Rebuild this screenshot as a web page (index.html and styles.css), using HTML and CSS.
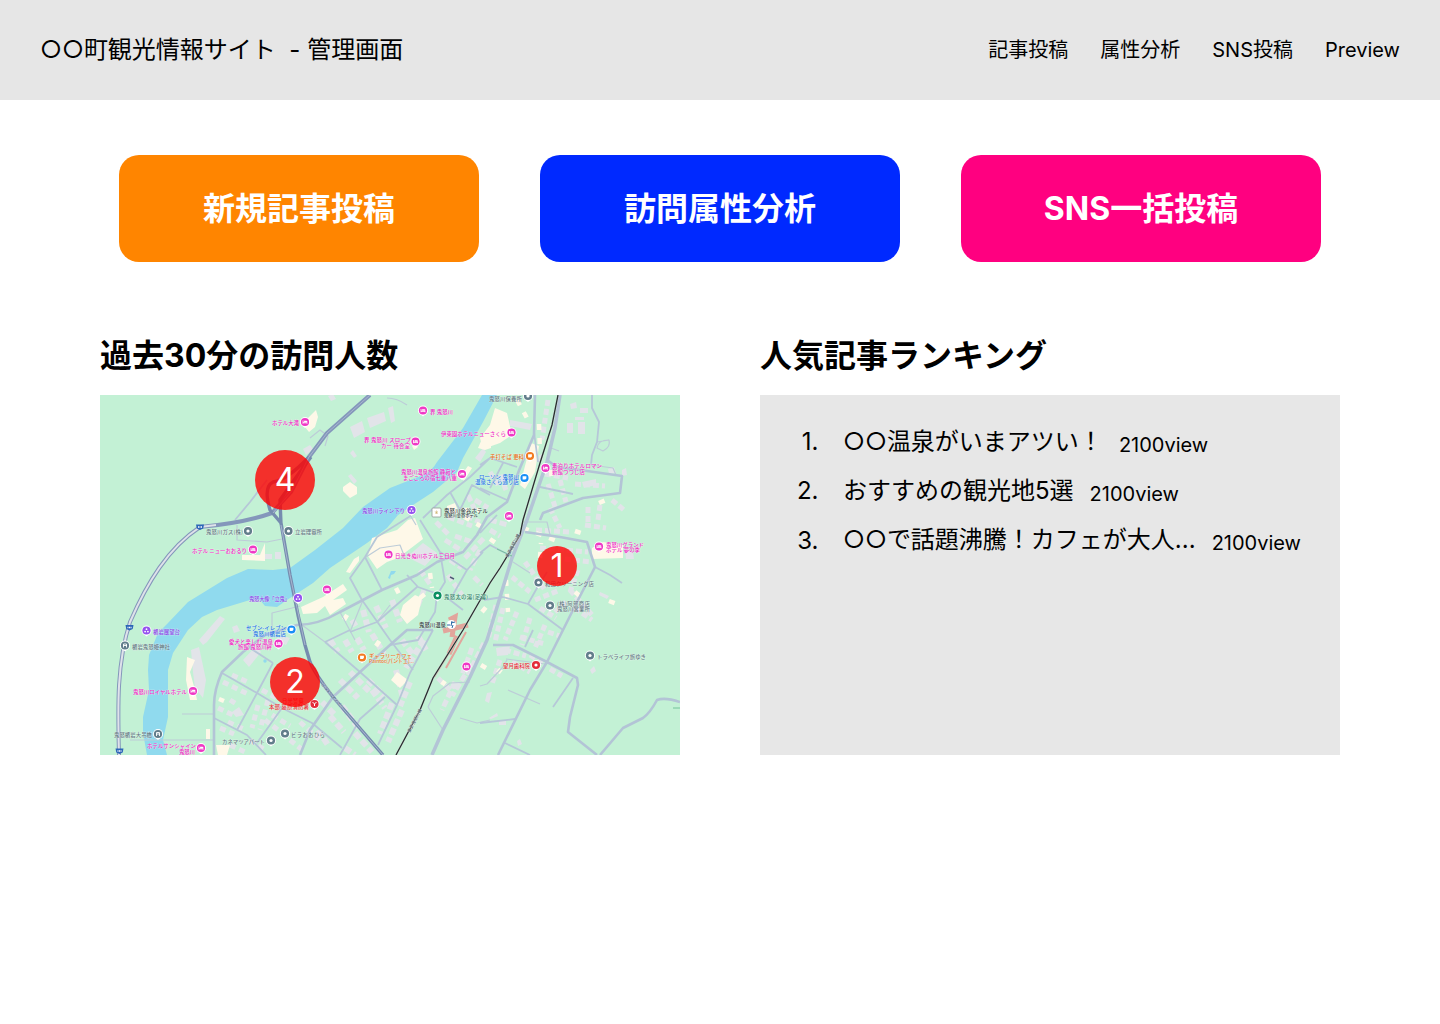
FILE: index.html
```html
<!DOCTYPE html>
<html lang="ja">
<head>
<meta charset="utf-8">
<title>○○町観光情報サイト - 管理画面</title>
<link rel="stylesheet" href="styles.css">
</head>
<body>
<header class="header">
  <div class="site-title">○○町観光情報サイト&nbsp; - 管理画面</div>
  <nav class="nav"><a>記事投稿</a><a>属性分析</a><a>SNS投稿</a><a>Preview</a></nav>
</header>
<main>
  <div class="actions">
    <a class="action orange">新規記事投稿</a>
    <a class="action blue">訪問属性分析</a>
    <a class="action pink">SNS一括投稿</a>
  </div>
  <div class="panels">
    <section>
      <h2>過去30分の訪問人数</h2>
      <div class="map">
        <svg class="map-art" viewBox="100 395 580 360" width="580" height="360">
          <defs>
            <g id="pin"><path d="M-4.6 1Q-3 4 0 6Q3 4 4.6 1Z" fill="#fff"/><circle r="5" fill="#fff"/><circle r="4.1" fill="currentColor"/></g>
            <g id="bed"><use href="#pin"/><path d="M-2.4-1.6H-1.6V.3H2.4V1.8H1.7V1.2H-1.7V1.8H-2.4ZM-.9-1.2H1.4Q2.4-1.2 2.4 0H-.9Z" fill="#fff"/></g>
            <g id="dot"><use href="#pin"/><circle r="1.6" fill="#fff"/></g>
            <g id="bag"><use href="#pin"/><path d="M-1.9-1.7H1.9V.4L.8 1.6H-1.9Z" fill="#fff"/></g>
            <g id="sight"><use href="#pin"/><circle cy="-1.3" r=".9" fill="#fff"/><circle cx="-1.4" cy="1.1" r=".9" fill="#fff"/><circle cx="1.4" cy="1.1" r=".9" fill="#fff"/></g>
            <g id="shield"><path d="M-4-2.5H4L3.2 1.5 0 3-3.2 1.5Z" fill="#2c66b8"/><path d="M-2 0H2" stroke="#fff" stroke-width="1.6" stroke-dasharray="1 .5"/></g>
          </defs>
          <rect x="100" y="395" width="580" height="360" fill="#c3f1d5"/>

          <path class="river" d="M482 395L463 428 437 462Q432 471 423 475L390 488 363 507 343 528 315 550 290 568 273 570 248 569 227 578 188 602 168 623 158 633 149 655 148 670 149 690 143 717 143 733 147 755H167L163 740 168 717 168 670 173 653 188 630 202 617 217 610 250 600H260L265 606 277 607 287 600 313 583 330 568 367 543 387 528 398 515 413 505 433 492 457 472 463 458 483 422 497 395Z"/>
          <path class="river" d="M388 578L391 571 396 571 394 574 391 575 390 579Z"/><circle class="river" cx="265" cy="661" r="1.7"/>

          <g class="bld">
            <path stroke-width="5" stroke-dasharray="6 3" d="M548 400L542 440M545 474L568 478M548 484L556 510M560 480L566 502M575 484L605 486M588 507L588 525M600 505L598 520M612 500L624 510M550 508L560 528M536 530L570 532M585 525L606 528M540 548L588 552M556 558L592 562M525 562L545 590M512 577L530 592M535 600L560 590M570 590L592 615M578 570L570 592M540 608L556 618M555 612L568 600M496 605L488 640M503 608L495 642M517 612L505 640M530 618L522 645M545 625L535 648M505 650L526 656M530 655L544 664M550 669L562 676M512 662L530 672M520 637L545 644M548 632L560 636M500 660L492 684M575 608L592 620"/>
            <path stroke-width="6" stroke-dasharray="7 3" d="M345 640L352 652M357 638L364 650M372 634L384 654M363 610L369 632M376 606L386 628M392 600L400 622M352 620L358 630M330 640L338 652M340 680L358 698M350 672L370 692M368 680L384 696M372 690L385 708M396 670L403 698M410 682L400 706M402 710L388 742M392 703L380 734M322 702L336 716M330 716L344 732M342 706L360 730M355 733L372 752M318 730L328 745M345 748L355 755M402 640L414 656M418 636L426 650M424 640L406 668"/>
            <path stroke-width="5" stroke-dasharray="6 4" d="M223 682L248 694M232 675L250 683M262 690L280 700M258 705L252 728M268 700L260 730M228 722L246 730M220 728L234 734M218 708L235 716M230 700L238 705M265 720L278 730M272 715L290 726M250 740L265 750M290 740L305 752M230 745L245 752M300 722L320 740"/>
            <path stroke-width="5" stroke-dasharray="7 3" d="M475 500L488 508M468 495L475 510M490 472L498 485M500 475L506 490M436 522L450 536M448 517L472 526M466 516L480 522M445 540L464 552M455 536L472 542M450 560L462 568M465 558L485 537M490 520L508 525M490 530L500 536M480 550L470 570M420 570L430 584M424 590L418 606M448 575L462 595M474 577L482 585M472 648L462 675M484 643L468 675M455 682L442 710M465 675L452 696M438 678L450 690"/>
            <path d="M350 427L362 421 365 432 354 438ZM367 418L384 412 386 421 370 428ZM388 408L393 406 395 421 391 423ZM328 396L333 394 336 399 331 401ZM350 453L353 450 357 456 354 458ZM348 476L351 474 357 481 354 484ZM303 449L310 445 313 449 306 455ZM510 420L532 424 530 430 510 426ZM567 423H573V433H567ZM578 422H585V434H578ZM575 417H584V420H575ZM580 408H588V413H580ZM407 557L423 543 437 553 425 566ZM475 458L483 448 486 452 480 462ZM265 554H272V559H265ZM275 552H281V559H275ZM191 650L199 647 206 680 203 698 195 688 193 672ZM220 616L225 619 207 642 203 645 199 640ZM232 627L237 625 240 631 234 633ZM243 660L256 646 261 652 249 667ZM232 712L239 707 244 715 236 717ZM281 635L290 638 286 645 278 642ZM496 648L510 646 508 655 497 656ZM570 404L576 402 577 408 571 409ZM608 469L614 467 616 473 609 474ZM622 470L626 468 627 475 622 476ZM539 455L544 454 542 461 538 462ZM582 482L596 479 596 485 584 488ZM590 670L594 666 596 671 592 674ZM487 693L492 692 489 703 485 701ZM489 718L497 713 498 716 491 719ZM499 720H506V725H499ZM517 741L520 739 522 744 518 746ZM625 550L633 552 634 559 626 559ZM600 592L609 596 607 599 599 595Z"/>
          </g>
          <g class="yellow">
            <path d="M308 418L316 410 318 417 315 427 309 432 305 427ZM343 487L350 482 357 487 357 494 350 498 343 491ZM478 448L485 432 491 428V448L485 450ZM495 408L507 413 512 435 500 443 483 449 480 438 490 425ZM531 443L539 446 535 472 525 489 520 485ZM370 547L372 538 397 530 408 520 415 518 423 539 398 558 387 562 377 569 368 556ZM301 607L323 597 343 584 347 590 333 600 343 598 346 604 330 615 325 606 317 613 303 614ZM400 615L403 605 415 595 422 598 418 615 407 624ZM242 555H260L265 543V561L242 560ZM187 657L195 660 190 672 195 690 197 700 190 700 186 680ZM391 680L397 672 408 680 400 688ZM592 548L603 542 623 545 623 558 592 559ZM216 745H230L227 755H218ZM206 729H210V739H206ZM412 446L416 443 418 447 414 450ZM460 477L468 466 472 468 464 481ZM447 506L455 503 458 511 447 513ZM346 572L354 559 359 556 359 561 350 573Z"/>
            <path stroke-width="4.5" stroke-dasharray="6 8" d="M517 400L527 418M539 424L540 452M551 470L552 482M575 531L581 533M523 528L557 541M540 558L541 543M490 539L500 546M506 580L508 612M575 592L580 596M609 601L622 606M599 503L606 500M463 510L480 510M452 510L484 528M430 573L432 588M396 588L400 596M344 620L350 610M376 646L380 640M420 598L430 590M482 612L487 606M498 673L501 669M481 665L486 668M442 685L445 681M219 699L224 701"/>
          </g>

          <g class="minor">
            <path d="M387 398Q397 398 407 405M310 438L320 430 328 436 325 446M237 525V540L267 542 282 539M272 632V613L300 606M591 465L613 468 616 475M551 448L559 451M523 522L547 522 550 535M513 562L530 573M366 557L380 548 400 545 405 558M428 707L443 730M428 707L433 696 450 683 470 682M460 718L477 723 490 720M182 714H214M130 740H213M480 686L487 684 502 668 507 660M410 515L416 525M506 659L545 664M508 690L540 704M340 612L355 640M363 600L350 632M390 605L377 622M302 625L325 642"/>
            <path d="M597 448Q598 440 609 440Q611 447 603 451ZM597 442L609 440"/>
          </g>
          <g class="roads">
            <path d="M267 480L250 502 235 520M490 458L470 477 447 495 423 518M450 492L460 510 472 485 490 495M480 465L490 458 517 467M503 463L490 488M480 488L507 500M534 432L538 462M592 395V408L599 422 597 442 592 455 591 465M540 487L573 494M595 567L610 575 622 583M503 597L528 604 563 630M528 604L537 588 547 572M480 553L490 545 513 557M480 533L497 515M412 515L377 537 365 557 350 578 362 600 390 640 413 670M365 557L382 590M420 520L440 552 445 582 437 595 435 612 418 640 390 645M407 575L418 587 435 593M440 552L467 570 483 552M350 632L377 622 417 587M433 630L410 673 397 705 378 745M360 672L397 705M325 642L350 630M325 642L360 672M290 712L312 723 342 748M340 755L360 719 385 697M222 673L257 693 282 708 300 717M214 718L247 735 266 755M273 663L257 693 237 730M250 648L273 663M282 708L257 743M553 707L573 678M480 723L515 719M505 743L530 755M525 647L533 630M467 570L450 600 463 610M513 557L518 540M484 600L503 597"/>
          </g>
          <g class="major">
            <path d="M560 395L555 428 547 462 527 520 512 558 487 640 470 677 443 730 432 755" stroke-width="3.5"/>
            <path d="M535 395L534 435 520 468 507 502 487 517 477 535 463 552 437 562 417 575 382 590 340 612Q318 625 297 625L265 635 243 652 222 672Q214 690 214 705V755"/>
            <path d="M547 460L557 467 580 470 622 476 620 493 583 498 543 513 540 520M525 532L560 537 587 542 595 567 577 602 558 640 547 662 530 690 498 755M493 645L513 645 547 662 577 678 578 685 570 717 568 732 597 755M600 755L623 728 643 718Q650 713 657 700 665 697 680 702M433 630L407 630 390 645 360 672 333 697 310 730 300 755"/>
          </g>

          <g class="highway">
            <path d="M370 395L327 433 309 457 291 492 272 513Q244 523 200 527C168 548 147 583 130 622C116 665 118 712 119 755" stroke="#8497bb" stroke-width="4"/>
            <path d="M216 525L200 527C168 548 147 583 130 622C116 665 118 712 119 755" stroke="#dfe2ea" stroke-width="2"/>
            <path d="M309 457Q287 480 273 482 263 487 270 510L281 523 290 575 298 615 305 645 310 662Q315 674 333 697L383 755M311 457Q301 470 280 500L281 524" stroke="#768caf" stroke-width="3.4"/>
            <path d="M370 395L327 433 309 457 291 492 273 513M281 525L290 575 305 645M310 662Q315 674 333 697L383 755" stroke="#a7b5ce" stroke-width="1"/>
          </g>

          <g fill="none" stroke="#e2a59c" stroke-width="5"><path d="M449 620L455 617 452 637M443 631L468 625M457 636L449 654"/><path d="M458 638L434 677M466 632L446 668" stroke-width="2"/></g>
          <path d="M558 395L552 425 540 463 523 520 520 535 500 568 490 583 463 630 433 678 420 710 396 755" fill="none" stroke="#d9ddde" stroke-width="1.9"/>
          <path d="M558 395L552 425 540 463 523 520 520 535 500 568 490 583 463 630 433 678 420 710 396 755" fill="none" stroke="#26302e" stroke-width="1.3"/>
          <path d="M497 549L512 556M480 597L486 595M673 708H680" stroke="#73c39a" stroke-width="1" fill="none"/>

          <g class="labels">
            <g fill="#f128c5">
              <text x="272" y="424.500" textLength="27">ホテル大滝</text>
              <text x="430" y="413.500" textLength="23">界 鬼怒川</text>
              <text x="364" y="442" textLength="47">界 鬼怒川 スロープ</text><text x="381" y="447.800" textLength="29">カー 待合室</text>
              <text x="441" y="435.500" textLength="65">伊東園ホテルニューさくら</text>
              <text x="401" y="474" textLength="55">鬼怒川温泉旅館 静寂と</text><text x="403" y="479.800" textLength="54">まごころの宿七重八重</text>
              <text x="552" y="468" textLength="50">素泊りホテルロマン</text><text x="552" y="473.800" textLength="33">新館つつじ店</text>
              <text x="606" y="546.700" textLength="38">鬼怒川グランド</text><text x="606" y="552.300" textLength="34">ホテル 夢の季</text>
              <text x="395" y="557.500" textLength="60">日光きぬ川ホテル三日月</text>
              <text x="192" y="552.500" textLength="55">ホテル ニューおおるり</text>
              <text x="229" y="643.700" textLength="44">愛犬と楽しむ温泉</text><text x="238" y="649.300" textLength="34">旅館 鬼怒川絆</text>
              <text x="133" y="694" textLength="54">鬼怒川ロイヤルホテル</text>
              <text x="147" y="748.300" textLength="49">ホテルサンシャイン</text><text x="179" y="754" textLength="16">鬼怒川</text>
            </g>
            <g fill="#8d45e8"><text x="362" y="512.800" textLength="43">鬼怒川ライン下り</text><text x="249" y="601" textLength="41">鬼怒大像「立鬼」</text><text x="153" y="633.500" textLength="27">楯岩展望台</text></g>
            <g fill="#2673e8"><text x="479" y="478.500" textLength="40">ローソン 鬼怒川</text><text x="475" y="484.200" textLength="44">温泉さくら通り店</text><text x="246" y="630.300" textLength="40">セブン-イレブン</text><text x="253" y="635.900" textLength="33">鬼怒川楯岩店</text></g>
            <g fill="#e9711c"><text x="490" y="459" textLength="34">手打そば 更科</text><text x="369" y="657.500" textLength="43">ギャラリーカフェ</text><text x="369" y="663.200" textLength="45" lengthAdjust="spacingAndGlyphs">Paintoɛ(パントエ)...</text></g>
            <g fill="#687b86"><text x="489" y="400.500" textLength="33">鬼怒川保養所</text><text x="206" y="534" textLength="37">鬼怒川ガス(株)</text><text x="295" y="534" textLength="27">立岩理容所</text><text x="545" y="585.500" textLength="49">和田クリーニング店</text><text x="557" y="605.700" textLength="33">(株)阿部商店</text><text x="557" y="611.300" textLength="33">鬼怒川営業所</text><text x="132" y="648.700" textLength="38">楯岩鬼怒姫神社</text><text x="114" y="737" textLength="38">鬼怒楯岩大吊橋</text><text x="222" y="743.500" textLength="43">カネマツアパート</text><text x="291" y="737" textLength="34">ビラおおひら</text><text x="597" y="658.500" textLength="49">トラベライフ旅ゆき</text></g>
            <text x="444" y="598.500" textLength="44" fill="#39866e">鬼怒太の湯(足湯)</text>
            <g fill="#343e43"><text x="444" y="512.800" textLength="44">鬼怒川金谷ホテル</text><text x="444" y="517.400" textLength="34" class="tiny">鬼怒川金谷ホテル</text><text x="419" y="626.500" textLength="27">鬼怒川温泉</text></g>
            <g fill="#e9303b"><text x="503" y="667.500" textLength="27">望月歯科院</text><text x="282" y="703.300" textLength="22">日光警察</text><text x="269" y="709.300" textLength="40">本部 藤原消防署</text></g>
            <g fill="#52606a" class="tiny"><text transform="translate(508 558) rotate(-63)" textLength="26">東武鬼怒川線</text><text transform="translate(410 733) rotate(-63)" textLength="26">東武鬼怒川線</text></g>
            <text transform="translate(321 685) rotate(49)" textLength="31" fill="#566b8c" class="tiny">Nikko Kaido</text>
          </g>

          <g color="#ef38c5"><use href="#bed" x="305" y="422"/><use href="#bed" x="423" y="410.500"/><use href="#bed" x="415.500" y="441.500"/><use href="#bed" x="511.500" y="432.500"/><use href="#bed" x="462" y="474"/><use href="#bed" x="545.500" y="468"/><use href="#bed" x="509" y="516"/><use href="#bed" x="599" y="546.500"/><use href="#bed" x="388.500" y="554.500"/><use href="#bed" x="327" y="589.500"/><use href="#bed" x="253" y="549.500"/><use href="#bed" x="278.500" y="643.500"/><use href="#bed" x="193" y="691"/><use href="#bed" x="201" y="748"/><use href="#bed" x="466.500" y="666.500"/></g>
          <g color="#9553ef"><use href="#sight" x="411.500" y="510"/><use href="#sight" x="298" y="598"/><use href="#sight" x="146.500" y="630.500"/></g>
          <g color="#188ef5"><use href="#bag" x="524.500" y="478"/><use href="#bag" x="291.500" y="629.500"/></g>
          <g color="#f27b20"><use href="#bag" x="530" y="456"/><use href="#bag" x="362" y="657.500"/></g>
          <g color="#627d8b"><use href="#dot" x="528" y="396"/><use href="#dot" x="248" y="531"/><use href="#dot" x="288.500" y="531"/><use href="#dot" x="538.500" y="582.500"/><use href="#dot" x="550" y="605.500"/><use href="#dot" x="590" y="655.500"/><use href="#dot" x="271" y="740.500"/><use href="#dot" x="285" y="733.500"/><use href="#pin" x="125" y="645.500"/><use href="#pin" x="158" y="734"/></g>
          <path d="M123.500 647.500V644H126.500V647.500M123 645.500H127M156.500 736V732.500H159.500V736M156 734H160" stroke="#fff" stroke-width=".9" fill="none"/>
          <use href="#dot" x="437.500" y="595.500" color="#0a8f62"/>
          <use href="#dot" x="536" y="665" color="#e32d39"/>
          <g color="#e32d39"><use href="#pin" x="314.500" y="704"/></g><path d="M312.500 702L314.500 704 316.500 702M314.500 704V706" stroke="#fff" fill="none"/>
          <use href="#shield" x="200" y="527"/><use href="#shield" x="129.500" y="627.500"/><use href="#shield" x="119.500" y="751"/>
          <rect x="432" y="508" width="9" height="9" rx="1" fill="#fff" stroke="#8f9995" stroke-width=".8"/><path d="M436.500 510.500V514M434.800 511.500L438 513.500M438 511.500L435 513.500" stroke="#ccb26b" stroke-width=".6"/>
          <circle cx="451.500" cy="624.500" r="4.500" fill="#fff"/><path d="M447 625H450M452 621L451 626M451 623L455 622M453 625L452 628" stroke="#2767a5"/>
          <path d="M450 577L454 579" stroke="#4d5c74" stroke-width="1.500"/>
        </svg>
        <span class="visitors four">4</span>
        <span class="visitors one">1</span>
        <span class="visitors two">2</span>
      </div>
    </section>
    <section>
      <h2>人気記事ランキング</h2>
      <div class="ranking">
        <div class="row"><span class="num">1.</span><span class="name">○○温泉がいまアツい！</span><span class="views">2100view</span></div>
        <div class="row"><span class="num">2.</span><span class="name">おすすめの観光地5選</span><span class="views">2100view</span></div>
        <div class="row"><span class="num last">3.</span><span class="name">○○で話題沸騰！カフェが大人...</span><span class="views">2100view</span></div>
      </div>
    </section>
  </div>
</main>
</body>
</html>
```
FILE: styles.css
```css
* { box-sizing: border-box; }
body { margin: 0; background: #fff; color: #000; font-family: Inter, "Noto Sans CJK JP", sans-serif; }
.header { height: 100px; padding: 0 40px; background: #e6e6e6; display: flex; align-items: center; justify-content: space-between; }
.site-title { font-size: 24px; line-height: 30px; }
.nav { display: flex; gap: 32px; font-size: 20px; line-height: 24px; }
.actions { display: flex; justify-content: center; gap: 61px; padding-top: 55px; }
.action { width: 360px; height: 107px; border-radius: 20px; display: flex; align-items: center; justify-content: center; color: #fff; font-size: 32px; font-weight: 700; line-height: 40px; }
.orange { background: #ff8500; }
.blue { background: #0029ff; }
.pink { background: #ff0080; }
.panels { display: grid; grid-template-columns: 580px 580px; gap: 80px; padding: 74px 100px 0; }
h2 { margin: 0 0 19px; font-size: 32px; font-weight: 700; line-height: 40px; white-space: nowrap; }
.map { position: relative; height: 360px; overflow: hidden; }
.map-art { display: block; }
.river { fill: #90daee; }
.bld { fill: #e2e4e9; }
.bld path[stroke-width] { fill: none; stroke: #e2e4e9; }
.yellow { fill: #fef8e8; }
.yellow path[stroke-width] { fill: none; stroke: #fef8e8; }
.minor, .roads, .major, .highway { fill: none; stroke-linejoin: round; }
.minor { stroke: #bdccd8; stroke-width: 1.2; }
.roads { stroke: #b6c7d8; stroke-width: 1.8; }
.major { stroke: #b3c4d6; stroke-width: 2.6; }
.labels { font-family: "Noto Sans CJK JP", sans-serif; font-size: 5.4px; font-weight: 500; }
.labels text { stroke: rgba(255, 255, 255, .5); stroke-width: .6px; paint-order: stroke; }
.labels .tiny { font-size: 4.2px; }
.visitors { position: absolute; display: flex; align-items: center; justify-content: center; border-radius: 50%; background: rgba(255, 0, 0, .8); color: #fff; font-size: 32px; line-height: 40px; }
.four { left: 155px; top: 55px; width: 60px; height: 60px; }
.one { left: 437px; top: 151px; width: 40px; height: 40px; }
.two { left: 170px; top: 262px; width: 50px; height: 50px; }
.ranking { height: 360px; padding: 32px 0 0 36px; background: #e7e7e7; display: flex; flex-direction: column; gap: 19px; }
.row { display: flex; align-items: baseline; height: 30px; line-height: 30px; font-size: 24px; white-space: nowrap; }
.num { width: 22.5px; margin-right: 24.5px; text-align: right; }
.last { transform: translateY(1px); }
.views { margin-left: 16px; font-size: 20px; transform: translateY(2px); }
```
